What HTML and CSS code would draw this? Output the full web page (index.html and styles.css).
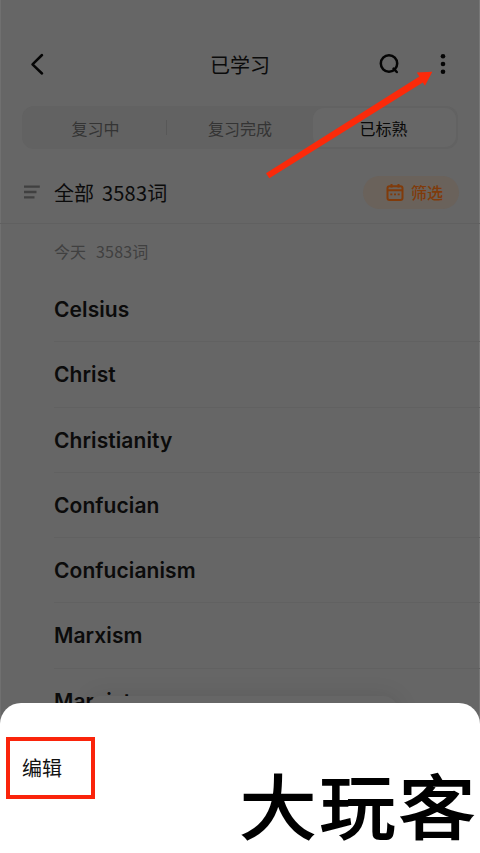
FILE: index.html
```html
<!DOCTYPE html>
<html lang="zh-CN">
<head>
<meta charset="utf-8">
<title>已学习</title>
<link rel="stylesheet" href="styles.css">
</head>
<body>
<div class="screen">
  <header class="topbar">
    <svg class="back" width="16" height="24" viewBox="0 0 16 24"><path d="M13 3 3.5 12.3 13 21.5"/></svg>
    <h1>已学习</h1>
    <div class="actions">
      <svg class="search" width="22" height="22" viewBox="0 0 22 22"><circle cx="10" cy="10.5" r="8.2"/><path d="m14.6 15.6 3.2 3.4"/></svg>
      <svg class="more" width="6" height="24" viewBox="0 0 6 24"><circle cx="3" cy="4.2" r="2.3"/><circle cx="3" cy="12" r="2.3"/><circle cx="3" cy="19.8" r="2.3"/></svg>
    </div>
  </header>
  <nav class="tabs">
    <span class="tab">复习中</span>
    <span class="tab divided">复习完成</span>
    <span class="tab active">已标熟</span>
  </nav>
  <div class="summary">
    <svg class="lines" width="16" height="14" viewBox="0 0 16 14"><path d="M0 1.6h15.8M0 7h12.5M0 12.3h10.5"/></svg>
    <span class="total">全部</span><span class="count">3583词</span>
    <button class="filter">
      <svg width="18" height="19" viewBox="0 0 18 19"><rect x="1.5" y="3.2" width="15" height="13.8" rx="2"/><path d="M1.5 7.2h15M5.5 1v3.5M12.5 1v3.5"/><path class="dots" d="M4.3 11.3h2M8 11.3h2M11.7 11.3h2"/></svg>
      <span>筛选</span>
    </button>
  </div>
  <main>
    <div class="day"><span>今天</span><span>3583词</span></div>
    <ul class="words">
      <li>Celsius</li>
      <li>Christ</li>
      <li>Christianity</li>
      <li>Confucian</li>
      <li>Confucianism</li>
      <li>Marxism</li>
      <li>Marxist</li>
    </ul>
  </main>
  <div class="toast"></div>
  <section class="sheet">
    <div class="edit">编辑</div>
    <div class="brand">大玩客</div>
  </section>
  <svg class="arrow" width="480" height="200" viewBox="0 0 480 200"><path d="M266 173.3 419.3 76.6 416.8 72.4 432.3 71.8 425 85.8 422.8 82.6 269.3 178.3z"/></svg>
</div>
</body>
</html>
```
FILE: styles.css
```css
* { box-sizing: border-box; }
body { margin: 0; }
.screen {
  position: relative;
  width: 480px;
  height: 853px;
  overflow: hidden;
  background: #666;
  box-shadow: inset 1px 0 #707070, inset -1px 0 #777;
  color: #0b0b0b;
  font-family: "Noto Sans CJK SC", sans-serif;
}
.topbar {
  display: grid;
  grid-template-columns: 1fr auto 1fr;
  align-items: center;
  height: 106px;
  padding: 22px 34px 0 29px;
}
.topbar h1 { margin: 0; padding: 1px 0 0 5px; font-size: 20px; font-weight: 400; line-height: 30px; }
.back, .search { fill: none; stroke: #050505; stroke-width: 2.5; stroke-linecap: round; stroke-linejoin: round; }
.actions { display: flex; justify-content: flex-end; align-items: center; gap: 39px; }
.more { fill: #050505; }
.tabs {
  display: grid;
  grid-template-columns: 143px 146px 1fr;
  height: 43px;
  margin: 0 22px;
  padding: 2px;
  background: #626262;
  border-radius: 12px;
}
.tab { position: relative; display: flex; align-items: center; justify-content: center; font-size: 16px; color: #343434; }
.divided::before { content: ""; position: absolute; left: -1px; top: 12px; width: 1px; height: 15px; background: #585858; }
.active { padding-right: 2px; background: #676767; border-radius: 11px; color: #080808; }
.summary {
  display: flex;
  align-items: center;
  height: 75px;
  padding: 12px 21px 0 24px;
  border-bottom: 1px solid #606060;
  font-size: 20px;
}
.lines { fill: none; stroke: #404040; stroke-width: 2.3; margin-right: 14px; }
.count { margin-left: 8px; letter-spacing: .2px; }
.filter {
  display: flex;
  align-items: center;
  gap: 7px;
  width: 96px;
  height: 33px;
  margin-left: auto;
  padding: 0 0 0 23px;
  border: 0;
  border-radius: 17px;
  background: #6a625b;
  color: #803b0b;
  font: 500 16px "Noto Sans CJK SC", sans-serif;
}
.filter svg { fill: none; stroke: #803b0b; stroke-width: 2; flex: none; }
.filter .dots { stroke-width: 1.8; }
.day { display: flex; gap: 10px; height: 53px; padding: 15px 0 0 54px; font-size: 16px; line-height: 24px; color: #404040; }
.day span + span { letter-spacing: .2px; }
.words { list-style: none; margin: 0 0 0 54px; padding: 0; font: 600 21px Inter, sans-serif; letter-spacing: .08px; }
.words li { height: 65.3px; line-height: 65px; border-bottom: 1px solid #616161; }
.toast { position: absolute; left: 91px; top: 696px; width: 308px; height: 40px; border-radius: 8px 16px 0 0; background: #666; box-shadow: 0 0 22px rgba(0,0,0,.10); }
.sheet {
  position: absolute;
  left: 0;
  bottom: 0;
  width: 480px;
  height: 150px;
  display: flex;
  justify-content: space-between;
  padding: 34px 0 0 6px;
  background: #fff;
  border-radius: 21px 21px 0 0;
}
.edit { width: 89px; height: 62px; padding-left: 12px; border: 4px solid #fa240b; font-size: 20px; line-height: 53px; color: #111; }
.brand {
  width: 240px;
  height: 78px;
  margin-top: 28px;
  font-size: 76px;
  line-height: 78px;
  letter-spacing: 3.5px;
  font-weight: 400;
  color: #000;
  -webkit-text-stroke: 2px #000;
  stroke-linejoin: round;
  white-space: nowrap;
  transform: scaleY(.92);
}
.arrow { position: absolute; left: 0; top: 0; fill: #fb2a0a; }
```
